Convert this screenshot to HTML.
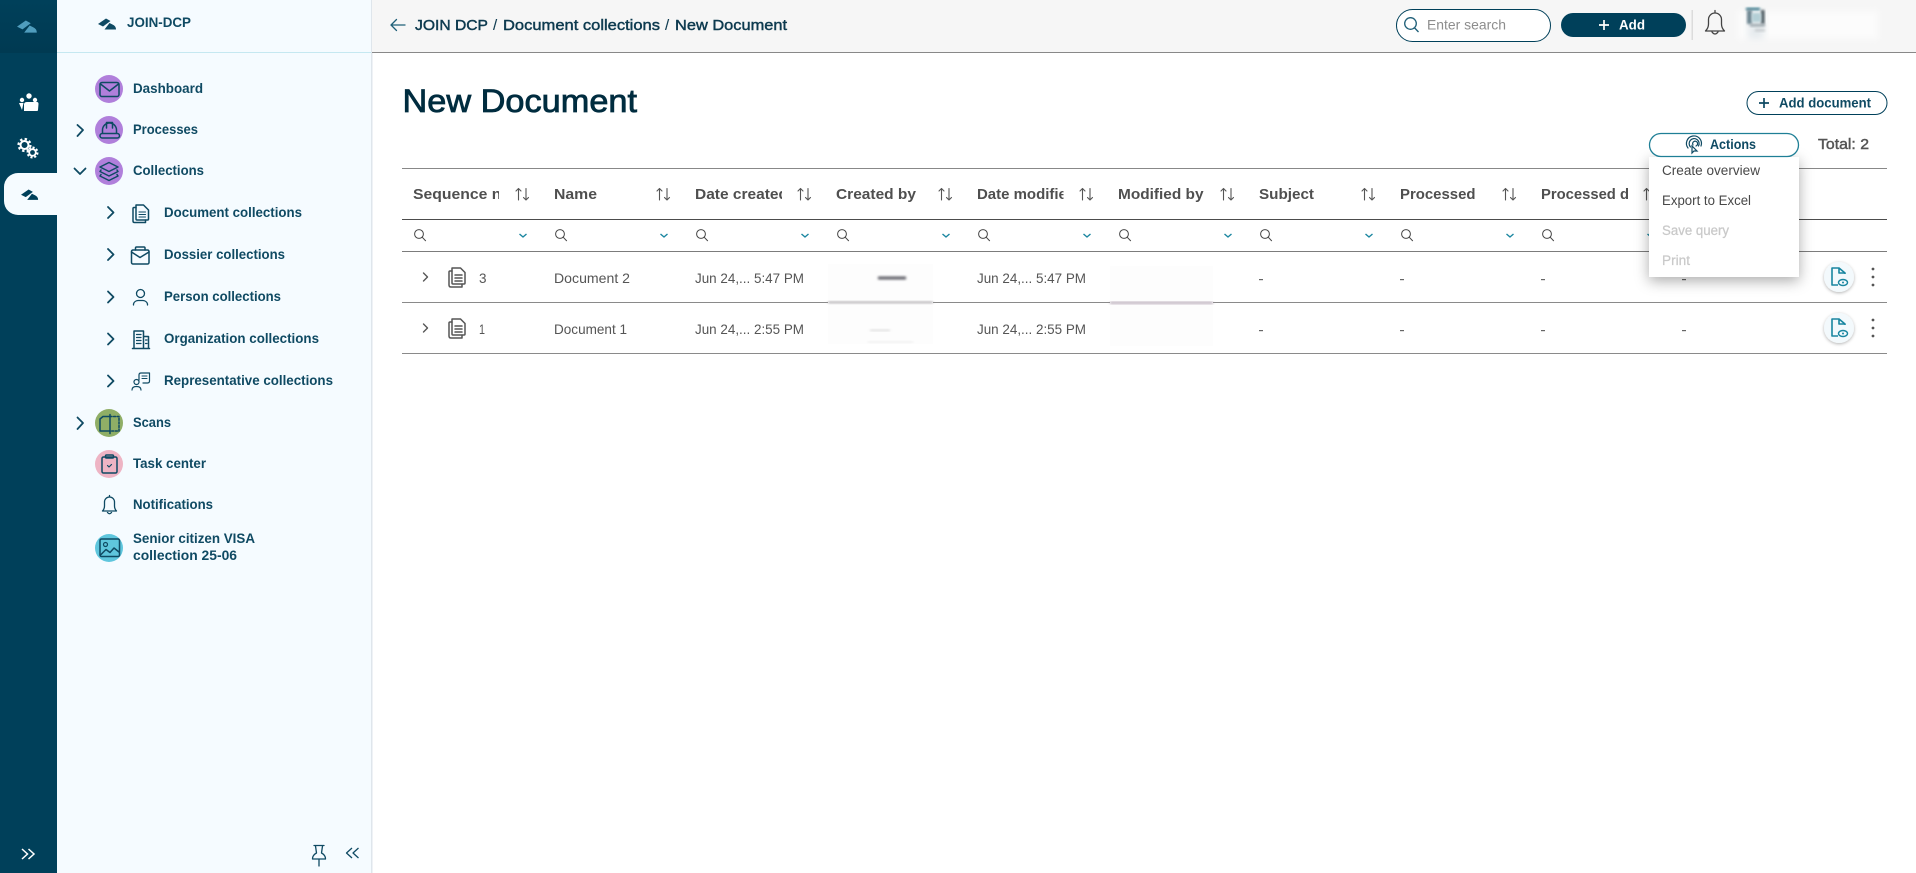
<!DOCTYPE html>
<html lang="en">
<head>
<meta charset="utf-8">
<title>New Document</title>
<style>
html,body{margin:0;padding:0;background:#fff;width:1916px;height:873px;overflow:hidden}
svg{display:block}
text{font-family:"Liberation Sans",sans-serif}
.s{font-size:14px;font-weight:bold;fill:#0f4a63}
.bc{font-size:15px;fill:#0d3a4f;stroke:#0d3a4f;stroke-width:.45}
.h{font-size:15px;font-weight:bold;fill:#4f4f4f}
.c{font-size:14px;fill:#555}
.m{font-size:13.5px;fill:#484848}
.d{font-size:13.5px;fill:#c9c9c9;stroke:#c9c9c9;stroke-width:.25}
.i{fill:none;stroke:#0f4a63;stroke-width:1.5;stroke-linecap:round;stroke-linejoin:round}
.g{fill:none;stroke:#555;stroke-width:1.4;stroke-linecap:round;stroke-linejoin:round}
</style>
</head>
<body>
<svg width="1916" height="873" viewBox="0 0 1916 873" xmlns="http://www.w3.org/2000/svg">
<defs>
  <filter id="b1" x="-30%" y="-60%" width="160%" height="220%"><feGaussianBlur stdDeviation="1.2"/></filter>
  <filter id="b2" x="-30%" y="-30%" width="160%" height="160%"><feGaussianBlur stdDeviation="3.5"/></filter>
  <filter id="sh" x="-30%" y="-30%" width="160%" height="170%"><feDropShadow dx="0" dy="4" stdDeviation="7" flood-color="#000" flood-opacity=".33"/></filter>
  <filter id="sh2" x="-40%" y="-40%" width="180%" height="180%"><feDropShadow dx="0" dy="1" stdDeviation="1.5" flood-color="#000" flood-opacity=".3"/></filter>
  <linearGradient id="rh" x1="0" y1="0" x2="0" y2="1"><stop offset="0" stop-color="#00405a"/><stop offset="1" stop-color="#003a52"/></linearGradient>
  <g id="logo"><path d="M0 6 L8 .5 L12.5 3 L5 8.5Z"/><path d="M6.5 11.5 L18 11.5 Q18 8 14.5 6.5 L11.5 5Z"/></g>
  <g id="hf">
    <circle cx="6" cy="74" r="4.4" fill="none" stroke="#444" stroke-width="1"/><path d="M9.2 77.2 L12.8 81" stroke="#444" stroke-width="1" fill="none"/>
    <path d="M106.500 74 L110 77 L113.500 74" fill="none" stroke="#1a86a0" stroke-width="1.4"/>
  </g>
  <g id="sort" class="g" style="stroke-width:1.1">
    <path d="M105.500 40 V28.500 M103 31 L105.500 28.500 L108 31"/>
    <path d="M113 28.500 V40 M110.500 37.500 L113 40 L115.500 37.500"/>
  </g>
  <g id="docs" fill="none" stroke="#555" stroke-width="1.5" stroke-linejoin="round" stroke-linecap="round">
    <path d="M4 1 H12.500 L17 5.500 V16 Q17 17 16 17 H5 Q4 17 4 16Z"/>
    <path d="M4 4 H2 Q1 4 1 5 V18 Q1 20 3 20 H14 V17"/>
    <path d="M7 8 H14 M7 11 H14 M7 14 H14"/>
  </g>
  <g id="rowact">
    <circle cx="0" cy="0" r="15" fill="#f3f9fc" filter="url(#sh2)"/>
    <path d="M6 -3 V-4 L0 -9 H-7 V8 H-1 M0 -9 V-4 H6" fill="none" stroke="#1a86a0" stroke-width="1.600" stroke-linejoin="round"/>
    <ellipse cx="4" cy="5.500" rx="4.500" ry="3" fill="none" stroke="#1a86a0" stroke-width="1.400"/><circle cx="4" cy="5.500" r="1" fill="#1a86a0"/>
    <circle cx="34" cy="-8" r="1.400" fill="#555"/><circle cx="34" cy="0" r="1.400" fill="#555"/><circle cx="34" cy="8" r="1.400" fill="#555"/>
  </g>
</defs>

<!-- page background -->
<rect width="1916" height="873" fill="#fff"/>

<!-- rail -->
<rect x="0" y="0" width="57" height="873" fill="#00405a"/>
<rect x="0" y="0" width="57" height="53" fill="url(#rh)"/>
<use href="#logo" transform="translate(17,20) scale(1.1)" fill="#4f9dbd"/>
<g fill="#fff">
  <circle cx="22" cy="100" r="2.200"/><circle cx="29" cy="96" r="2.700"/><circle cx="35" cy="100" r="2.200"/>
  <path d="M24 104 Q24.500 102 27 102 H37 Q38.500 102 38.500 104 L38 110 Q38 111 36.500 111 H24 Z"/>
  <path d="M19 103 H23.500 L22 110Z"/>
</g>
<g fill="none" stroke="#fff">
  <circle cx="24.500" cy="145" r="4" stroke-width="2"/><circle cx="24.500" cy="145" r="6" stroke-width="2.200" stroke-dasharray="2.400 2.300"/>
  <circle cx="32.500" cy="152.500" r="3.300" stroke-width="1.800"/><circle cx="32.500" cy="152.500" r="5" stroke-width="2" stroke-dasharray="2.100 1.800"/>
</g>
<path d="M57 173 H18 A14 14 0 0 0 4 187 V201 A14 14 0 0 0 18 215 H57Z" fill="#f5fbff"/>
<use href="#logo" transform="translate(21,189) scale(.95)" fill="#00405a"/>
<path d="M22 849 L27.500 854 L22 859 M28.500 849 L34 854 L28.500 859" fill="none" stroke="#fff" stroke-width="1.500"/>

<!-- sidebar -->
<rect x="57" y="0" width="315" height="873" fill="#f5fbff"/>
<rect x="371" y="0" width="1.500" height="873" fill="#dfe6ec"/>
<rect x="57" y="52" width="314" height="1" fill="#c5e8f1"/>
<use href="#logo" transform="translate(98,18)" fill="#0f4a63"/>
<text class="s" x="127" y="27" textLength="64" lengthAdjust="spacingAndGlyphs">JOIN-DCP</text>

<circle cx="109" cy="89" r="14" fill="#b07fdb"/>
<rect x="100" y="82.500" width="19" height="14" rx="2" class="i"/><path class="i" d="M100.500 84 L109.500 91 L118.500 84"/>
<text class="s" x="133" y="93" textLength="70" lengthAdjust="spacingAndGlyphs">Dashboard</text>

<path class="i" style="stroke-width:1.800" d="M77.500 125 L83 130 L77.500 136"/>
<circle cx="109" cy="130" r="14" fill="#b07fdb"/>
<path class="i" d="M102.500 133 V130 A7 7 0 0 1 116.500 130 V133"/><path class="i" d="M106.500 128 V122.500 H112.500 V128"/><rect class="i" x="100" y="133.500" width="19.500" height="4.500" rx="2.200"/>
<text class="s" x="133" y="134" textLength="65" lengthAdjust="spacingAndGlyphs">Processes</text>

<path class="i" style="stroke-width:1.800" d="M74.500 168.500 L80 174 L85.500 168.500"/>
<circle cx="109" cy="171" r="14" fill="#b07fdb"/>
<path class="i" d="M109 162.500 L118 167 L109 171.500 L100 167Z"/><path class="i" d="M101 170 L100 171.500 L109 176 L118 171.500 L117 170"/><path class="i" d="M101 174.500 L100 176 L109 180.500 L118 176 L117 174.500"/>
<text class="s" x="133" y="175" textLength="71" lengthAdjust="spacingAndGlyphs">Collections</text>

<path class="i" style="stroke-width:1.800" d="M108 207 L113.500 212.500 L108 218"/>
<path class="i" d="M136 205 H143.500 L148.500 210 V219 Q148.500 220 147.500 220 H137 Q136 220 136 219Z"/><path class="i" d="M136 207.500 H134 Q133 207.500 133 208.500 V221 Q133 222.500 134.500 222.500 H145.500 V220"/><path class="i" style="stroke-width:1.100" d="M139 212 H145.500 M139 214.500 H145.500 M139 217 H145.500"/>
<text class="s" x="164" y="217" textLength="138" lengthAdjust="spacingAndGlyphs">Document collections</text>

<path class="i" style="stroke-width:1.800" d="M108 249 L113.500 254.500 L108 260"/>
<rect class="i" x="131.500" y="250" width="17.500" height="14" rx="1.500"/><path class="i" d="M131.500 252 L140 257.500 L149 252"/><path class="i" d="M135.500 250 V248 Q135.500 247 136.500 247 H144 Q145 247 145 248 V250"/>
<text class="s" x="164" y="259" textLength="121" lengthAdjust="spacingAndGlyphs">Dossier collections</text>

<path class="i" style="stroke-width:1.800" d="M108 291.500 L113.500 297 L108 302.500"/>
<circle class="i" style="stroke-width:1.300" cx="140.500" cy="293.500" r="4"/><path class="i" style="stroke-width:1.300" d="M133.500 305 V304 A5 4.500 0 0 1 138 300.500 H143 A5 4.500 0 0 1 147.500 304 V305"/>
<text class="s" x="164" y="301" textLength="117" lengthAdjust="spacingAndGlyphs">Person collections</text>

<path class="i" style="stroke-width:1.800" d="M108 333.500 L113.500 339 L108 344.500"/>
<path class="i" d="M134 348 V331 H143.500 V348 M143.500 336.500 H148.500 V348 M132.500 348.500 H149.500"/><path class="i" style="stroke-width:1.200" d="M136.500 334.500 H141 M136.500 337.500 H141 M136.500 340.500 H141 M136.500 343.500 H141 M145.500 340 H147 M145.500 343.500 H147"/>
<text class="s" x="164" y="343" textLength="155" lengthAdjust="spacingAndGlyphs">Organization collections</text>

<path class="i" style="stroke-width:1.800" d="M108 375.500 L113.500 381 L108 386.500"/>
<path class="i" style="stroke-width:1.200" d="M139 380 V375 Q139 373 141 373 H149.500 V381 Q149.500 383 147.500 383 H143"/><path class="i" style="stroke-width:1.100" d="M142 376 H147 M142 378.500 H147"/>
<circle class="i" style="stroke-width:1.200" cx="136.500" cy="382" r="2.500"/><path class="i" style="stroke-width:1.200" d="M132 390 Q132 386.500 136.500 386.500 Q141 386.500 141 390"/>
<text class="s" x="164" y="385" textLength="169" lengthAdjust="spacingAndGlyphs">Representative collections</text>

<path class="i" style="stroke-width:1.800" d="M77.500 417.500 L83 423 L77.500 429"/>
<circle cx="109" cy="423" r="14" fill="#8fae66"/>
<path class="i" d="M110 416.500 H103 L100 419 V431 H110"/><path class="i" stroke-dasharray="2 1.600" d="M110 416.500 H119 V431 H110"/><path class="i" d="M110 414.500 V433.500"/>
<text class="s" x="133" y="427" textLength="38" lengthAdjust="spacingAndGlyphs">Scans</text>

<circle cx="109" cy="464" r="14" fill="#eeb4c4"/>
<rect class="i" x="102" y="457" width="15" height="16" rx="1.500"/><rect class="i" x="105.500" y="455" width="8" height="3" rx="1" fill="#eeb4c4"/><path class="i" style="stroke-width:1.200" d="M107.500 465.500 L109 467 L111.500 464.500"/>
<text class="s" x="133" y="468" textLength="73" lengthAdjust="spacingAndGlyphs">Task center</text>

<path class="i" style="stroke-width:1.300" d="M109.500 497 A5 5 0 0 0 104.500 502 V506 Q104.500 509 102.500 511 H116.500 Q114.500 509 114.500 506 V502 A5 5 0 0 0 109.500 497Z"/><path class="i" style="stroke-width:1.300" d="M107.500 512.500 Q109.500 515 111.500 512.500 M109.500 495.500 V497"/>
<text class="s" x="133" y="509" textLength="80" lengthAdjust="spacingAndGlyphs">Notifications</text>

<circle cx="109" cy="548" r="14" fill="#5fc6dd"/>
<rect class="i" x="100" y="539" width="19.500" height="17.500" rx="1.500"/><circle class="i" style="stroke-width:1.200" cx="105.500" cy="544.500" r="2"/><path class="i" d="M100.500 555 L106 549.500 L110 552.500 L114 548 L119 552"/>
<text class="s" x="133" y="543" textLength="122" lengthAdjust="spacingAndGlyphs">Senior citizen VISA</text>
<text class="s" x="133" y="560" textLength="104" lengthAdjust="spacingAndGlyphs">collection 25-06</text>

<path class="i" style="stroke-width:1.300" d="M314 845.500 H324 M315.500 846 L316.500 853 Q312.500 855 312.500 859 H325.500 Q325.500 855 321.500 853 L322.500 846 M319 859 V866"/>
<path class="i" style="stroke-linecap:butt;stroke-width:1.300" d="M352 848 L346.500 853 L352 858 M358.500 848 L353 853 L358.500 858"/>

<!-- topbar -->
<rect x="372" y="0" width="1544" height="52" fill="#f6f6f6"/>
<rect x="372" y="52" width="1544" height="1" fill="#888"/>
<path d="M391 25 H405 M396.500 19.500 L391 25 L396.500 30.500" fill="none" stroke="#1f5f78" stroke-width="1.300" stroke-linecap="round"/>
<text class="bc" x="415" y="30" textLength="73" lengthAdjust="spacingAndGlyphs">JOIN DCP</text>
<text class="bc" x="493" y="30" style="stroke-width:.1">/</text>
<text class="bc" x="503" y="30" textLength="157" lengthAdjust="spacingAndGlyphs">Document collections</text>
<text class="bc" x="665" y="30" style="stroke-width:.1">/</text>
<text class="bc" x="675" y="30" textLength="112" lengthAdjust="spacingAndGlyphs">New Document</text>

<rect x="1396.500" y="9.500" width="154" height="32" rx="16" fill="#fff" stroke="#00405a" stroke-width="1"/>
<circle cx="1410.500" cy="23.500" r="5.800" fill="none" stroke="#1f5f78" stroke-width="1.300"/><path d="M1414.700 28 L1418.500 32" stroke="#1f5f78" stroke-width="1.300" fill="none"/>
<text x="1427" y="29.500" font-size="14" fill="#8d8d8d" textLength="79" lengthAdjust="spacingAndGlyphs">Enter search</text>

<rect x="1561" y="13" width="125" height="24" rx="12" fill="#00405a"/>
<path d="M1599 25 H1609 M1604 20 V30" stroke="#fff" stroke-width="1.700"/>
<text x="1619" y="29.500" font-size="14" font-weight="bold" fill="#fff" textLength="26" lengthAdjust="spacingAndGlyphs">Add</text>
<rect x="1691.500" y="10" width="1.500" height="30" fill="#dcdcdc"/>
<path class="g" style="stroke:#444;stroke-width:1.300" d="M1715 13 A6.500 6.500 0 0 0 1708.500 19.500 V24 Q1708.500 28 1705.500 31 H1724.500 Q1721.500 28 1721.500 24 V19.500 A6.500 6.500 0 0 0 1715 13Z M1712 32 Q1715 36 1718 32 M1715 10.500 V13"/>

<g>
  <rect x="1738" y="11" width="140" height="28" fill="#fcfcfc" filter="url(#b2)"/>
  <rect x="1748" y="11" width="16" height="28" fill="#e6ebee" filter="url(#b2)"/>
  <rect x="1746" y="8" width="14" height="2" fill="#0d5870" filter="url(#b1)"/>
  <rect x="1747" y="10" width="5" height="14" fill="#6d8591" filter="url(#b1)"/>
  <rect x="1761" y="10" width="3.500" height="14" fill="#46545c" filter="url(#b1)"/>
  <rect x="1752" y="13" width="9" height="9" fill="#b4cfd6" filter="url(#b1)"/>
  <rect x="1750" y="24" width="15" height="2.500" fill="#9aa4aa" filter="url(#b1)"/>
  <rect x="1755" y="29" width="10" height="2.500" fill="#c6cbce" filter="url(#b1)"/>
</g>

<!-- heading -->
<text x="402.500" y="112" font-size="32" fill="#002c3f" stroke="#002c3f" stroke-width=".8" textLength="234.500" lengthAdjust="spacingAndGlyphs">New Document</text>

<rect x="1747" y="91.500" width="140" height="23" rx="11.500" fill="#fff" stroke="#00405a" stroke-width="1"/>
<path d="M1759 103 H1769 M1764 98 V108" stroke="#0f4a63" stroke-width="1.700"/>
<text x="1779" y="107.500" class="s" textLength="92" lengthAdjust="spacingAndGlyphs">Add document</text>

<text x="1818" y="149" font-size="15" fill="#555" stroke="#555" stroke-width=".45" textLength="51" lengthAdjust="spacingAndGlyphs">Total: 2</text>

<!-- table -->
<rect x="402" y="168" width="1485" height="1" fill="#888"/>
<rect x="402" y="219" width="1485" height="1" fill="#4c4c4c"/>
<rect x="402" y="251" width="1485" height="1" fill="#7c7c7c"/>
<rect x="402" y="302" width="1485" height="1" fill="#8a8a8a"/>
<rect x="402" y="353" width="1485" height="1" fill="#8a8a8a"/>

<g>
  <text class="h" x="413" y="199" textLength="98" lengthAdjust="spacingAndGlyphs">Sequence no</text><rect x="499" y="180" width="14" height="26" fill="#fff"/>
  <text class="h" x="554" y="199" textLength="43" lengthAdjust="spacingAndGlyphs">Name</text>
  <text class="h" x="695" y="199" textLength="93" lengthAdjust="spacingAndGlyphs">Date created</text><rect x="782" y="180" width="12" height="26" fill="#fff"/>
  <text class="h" x="836" y="199" textLength="80" lengthAdjust="spacingAndGlyphs">Created by</text>
  <text class="h" x="977" y="199" textLength="99" lengthAdjust="spacingAndGlyphs">Date modified</text><rect x="1063.500" y="180" width="14" height="26" fill="#fff"/>
  <text class="h" x="1118" y="199" textLength="85.500" lengthAdjust="spacingAndGlyphs">Modified by</text>
  <text class="h" x="1259" y="199" textLength="55" lengthAdjust="spacingAndGlyphs">Subject</text>
  <text class="h" x="1400" y="199" textLength="75.500" lengthAdjust="spacingAndGlyphs">Processed</text>
  <text class="h" x="1541" y="199" textLength="88" lengthAdjust="spacingAndGlyphs">Processed d</text><rect x="1628" y="180" width="10" height="26" fill="#fff"/>
</g>
<g>
  <use href="#sort" transform="translate(413,160)"/><use href="#sort" transform="translate(554,160)"/><use href="#sort" transform="translate(695,160)"/><use href="#sort" transform="translate(836,160)"/><use href="#sort" transform="translate(977,160)"/><use href="#sort" transform="translate(1118,160)"/><use href="#sort" transform="translate(1259,160)"/><use href="#sort" transform="translate(1400,160)"/><use href="#sort" transform="translate(1541,160)"/>
  <use href="#hf" transform="translate(413,160)"/><use href="#hf" transform="translate(554,160)"/><use href="#hf" transform="translate(695,160)"/><use href="#hf" transform="translate(836,160)"/><use href="#hf" transform="translate(977,160)"/><use href="#hf" transform="translate(1118,160)"/><use href="#hf" transform="translate(1259,160)"/><use href="#hf" transform="translate(1400,160)"/><use href="#hf" transform="translate(1541,160)"/>
</g>

<!-- blurred cells -->
<rect x="828" y="264" width="105" height="80" fill="#fdfdfd"/>
<rect x="1110" y="266" width="103" height="80" fill="#fdfdfd"/>
<rect x="878" y="276.500" width="28" height="3" fill="#5e5e66" filter="url(#b1)"/>
<rect x="828" y="301.500" width="105" height="1.600" fill="#9c989c" filter="url(#b1)"/>
<rect x="1110" y="302" width="103" height="1.600" fill="#9c8a9c" filter="url(#b1)"/>
<rect x="870" y="329.500" width="20" height="1.500" fill="#d6d6d6" filter="url(#b1)"/>
<rect x="868" y="341.500" width="45" height="1" fill="#e4e4e4" filter="url(#b1)"/>

<!-- row 1 -->
<path class="g" d="M423.500 273 L427.500 277 L423.500 281"/>
<use href="#docs" x="448" y="267"/>
<text class="c" x="479" y="283" textLength="7.500" lengthAdjust="spacingAndGlyphs">3</text>
<text class="c" x="554" y="283" textLength="76" lengthAdjust="spacingAndGlyphs">Document 2</text>
<text class="c" x="695" y="283" textLength="109" lengthAdjust="spacingAndGlyphs">Jun 24,... 5:47 PM</text>
<text class="c" x="977" y="283" textLength="109" lengthAdjust="spacingAndGlyphs">Jun 24,... 5:47 PM</text>
<!-- row 2 -->
<path class="g" d="M423.500 324 L427.500 328 L423.500 332"/>
<use href="#docs" x="448" y="318"/>
<text class="c" x="479" y="334" textLength="6" lengthAdjust="spacingAndGlyphs">1</text>
<text class="c" x="554" y="334" textLength="73" lengthAdjust="spacingAndGlyphs">Document 1</text>
<text class="c" x="695" y="334" textLength="109" lengthAdjust="spacingAndGlyphs">Jun 24,... 2:55 PM</text>
<text class="c" x="977" y="334" textLength="109" lengthAdjust="spacingAndGlyphs">Jun 24,... 2:55 PM</text>
<g fill="#666">
  <rect x="1259" y="279" width="4" height="1.200"/><rect x="1400" y="279" width="4" height="1.200"/><rect x="1541" y="279" width="4" height="1.200"/><rect x="1682" y="279" width="4" height="1.200"/>
  <rect x="1259" y="330" width="4" height="1.200"/><rect x="1400" y="330" width="4" height="1.200"/><rect x="1541" y="330" width="4" height="1.200"/><rect x="1682" y="330" width="4" height="1.200"/>
</g>
<use href="#rowact" transform="translate(1839,277)"/>
<use href="#rowact" transform="translate(1839,328)"/>

<!-- actions dropdown -->
<rect x="1649" y="157" width="150" height="120" fill="#fff" filter="url(#sh)"/>
<text class="m" x="1662" y="175" textLength="98" lengthAdjust="spacingAndGlyphs">Create overview</text>
<text class="m" x="1662" y="205" textLength="89" lengthAdjust="spacingAndGlyphs">Export to Excel</text>
<text class="d" x="1662" y="235" textLength="67" lengthAdjust="spacingAndGlyphs">Save query</text>
<text class="d" x="1662" y="265" textLength="28" lengthAdjust="spacingAndGlyphs">Print</text>

<rect x="1649.500" y="133.500" width="149" height="23" rx="11.500" fill="#fff" stroke="#1f7f96" stroke-width="1.300"/>
<g fill="none" stroke="#0f4a63" stroke-width="1.200" stroke-linecap="round">
  <path d="M1688 148 A7.500 7.500 0 1 1 1701 146"/>
  <path d="M1690.500 147 A5 5 0 1 1 1698.500 146"/>
  <path d="M1693 145 A2.500 2.500 0 1 1 1696 146"/>
  <path d="M1692 146 L1692 153 L1694 151 L1697 151Z" fill="#fff"/>
</g>
<text class="s" x="1710" y="149" textLength="46" lengthAdjust="spacingAndGlyphs">Actions</text>
</svg>
</body>
</html>
